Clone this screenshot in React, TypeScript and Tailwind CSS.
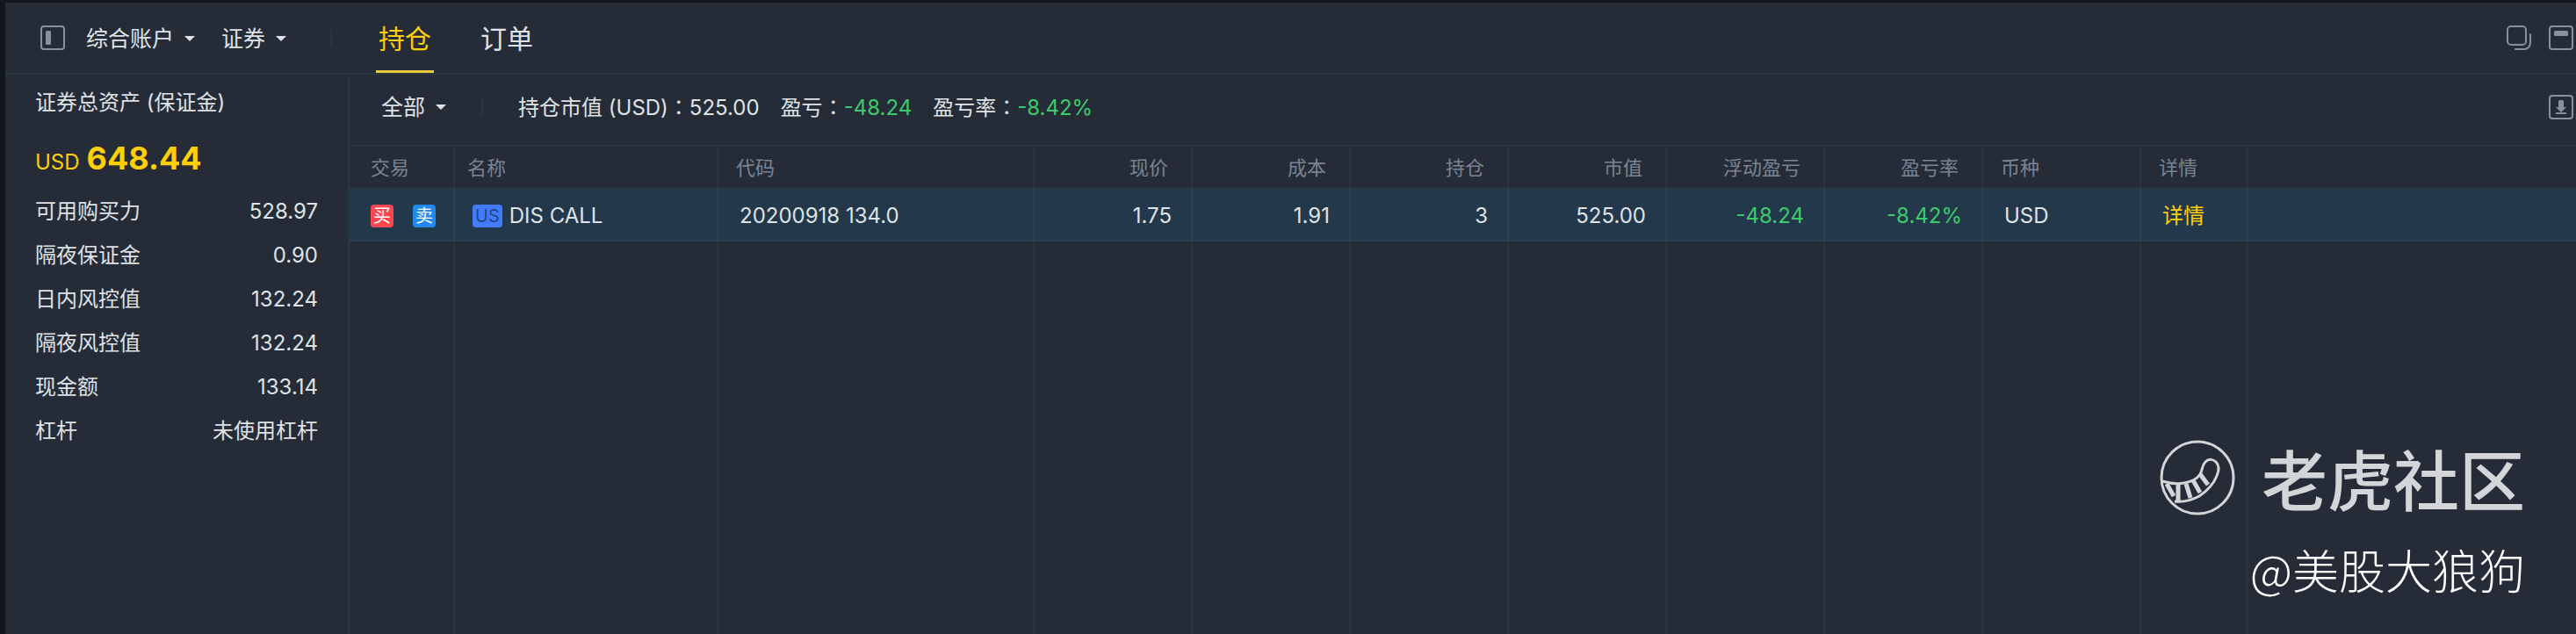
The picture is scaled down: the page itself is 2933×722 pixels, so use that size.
import { useState } from 'react'
import type { ReactNode } from 'react'

const assets = [
  { label: '可用购买力', value: '528.97' },
  { label: '隔夜保证金', value: '0.90' },
  { label: '日内风控值', value: '132.24' },
  { label: '隔夜风控值', value: '132.24' },
  { label: '现金额', value: '133.14' },
  { label: '杠杆', value: '未使用杠杆' },
]

const columns = [
  { title: '交易', width: 'w-[120px]', align: 'text-left' },
  { title: '名称', width: 'w-[300px]', align: 'text-left' },
  { title: '代码', width: 'w-[360px]', align: 'text-left' },
  { title: '现价', width: 'w-[180px]', align: 'text-right' },
  { title: '成本', width: 'w-[180px]', align: 'text-right' },
  { title: '持仓', width: 'w-[180px]', align: 'text-right' },
  { title: '市值', width: 'w-[180px]', align: 'text-right' },
  { title: '浮动盈亏', width: 'w-[180px]', align: 'text-right' },
  { title: '盈亏率', width: 'w-[180px]', align: 'text-right' },
  { title: '币种', width: 'w-[180px]', align: 'text-left' },
  { title: '详情', width: 'w-[122px]', align: 'text-left' },
]

const tabs = ['持仓', '订单']

function Caret() {
  return (
    <svg className="h-[6px] w-[12px]" viewBox="0 0 12 6" fill="currentColor" aria-hidden="true">
      <path d="M0 0h12L6 6z" />
    </svg>
  )
}

function MenuButton({ children }: { children: ReactNode }) {
  return (
    <button type="button" className="flex items-center gap-3 text-[25px]">
      {children}
      <Caret />
    </button>
  )
}

// the TC face centres the full-width colon
function Colon() {
  return <span className="font-['Noto_Sans_CJK_TC',sans-serif]">：</span>
}

function PanelIcon() {
  return (
    <svg className="size-7" viewBox="0 0 28 28" fill="none" aria-hidden="true">
      <rect x="1" y="1" width="26" height="26" rx="3" stroke="currentColor" strokeWidth="2" />
      <rect x="6" y="6" width="6" height="16" rx="1.5" fill="currentColor" />
    </svg>
  )
}

function CopyIcon() {
  return (
    <svg className="size-7" viewBox="0 0 28 28" fill="none" stroke="currentColor" strokeWidth="2" aria-hidden="true">
      <rect x="1" y="1" width="21" height="21" rx="4" />
      <path d="M27 10v10a7 7 0 0 1-7 7H10" strokeLinecap="round" />
    </svg>
  )
}

function WindowIcon() {
  return (
    <svg className="size-7" viewBox="0 0 28 28" fill="none" aria-hidden="true">
      <rect x="1" y="1" width="26" height="26" rx="3" stroke="currentColor" strokeWidth="2" />
      <rect x="6" y="6" width="16" height="6" rx="1.5" fill="currentColor" />
    </svg>
  )
}

function DownloadIcon() {
  return (
    <svg className="size-7" viewBox="0 0 28 28" fill="none" aria-hidden="true">
      <rect x="1" y="1" width="26" height="26" rx="3" stroke="currentColor" strokeWidth="2" />
      <path
        d="M11 7.500a1.500 1.500 0 0 1 1.500-1.500h3a1.500 1.500 0 0 1 1.500 1.500V14h3l-6 6-6-6h3zM8 20h12v2H8z"
        fill="currentColor"
      />
    </svg>
  )
}

function TailLogo() {
  return (
    <svg className="size-[86px]" viewBox="0 0 86 86" fill="none" stroke="currentColor" strokeWidth="3" aria-hidden="true">
      <circle cx="43" cy="43" r="41" />
      <path d="M3 47c7 2 15 4 25 2 9-2 14-4 18-10 3-5 2-10 6-14 4-4 9-3 12 0 4 4 4 9 1 16-4 10-11 17-20 23-9 5-19 7-28 6" />
      <path d="M8 50l8 14M21 50v19M30 50l5 16M38 46l8 14M46 39l9 12" strokeWidth="5" />
    </svg>
  )
}

export default function App() {
  const [tab, setTab] = useState('持仓')

  return (
    <div className="relative flex h-screen flex-col overflow-hidden border-t-[3px] border-l-[6px] border-[#12171d] bg-[#252c37] font-['Inter','Noto_Sans_CJK_SC',sans-serif] text-[24px] leading-9 text-[#dfe2e6]">
      <header className="flex h-[82px] shrink-0 items-center border-b-2 border-[#29353f] pl-10">
        <button type="button" aria-label="侧栏" className="text-[#87909e]">
          <PanelIcon />
        </button>
        <div className="ml-6 flex items-center gap-[30px] pt-0.5">
          <MenuButton>综合账户</MenuButton>
          <MenuButton>证券</MenuButton>
        </div>
        <span className="ml-[50px] h-5 w-0.5 bg-[#29353f]" />
        <nav className="ml-[50px] flex gap-[50px] self-stretch text-[30px]">
          {tabs.map((t) => (
            <button
              key={t}
              type="button"
              onClick={() => setTab(t)}
              className={
                t === tab
                  ? 'border-b-[3px] border-[#e8c93a] px-[3px] pt-1 text-[#fccf0a]'
                  : 'border-b-[3px] border-transparent px-[3px] pt-1'
              }
            >
              {t}
            </button>
          ))}
        </nav>
        <div className="ml-auto flex gap-5 pr-[3px] text-[#87909e]">
          <button type="button" aria-label="复制">
            <CopyIcon />
          </button>
          <button type="button" aria-label="窗口">
            <WindowIcon />
          </button>
        </div>
      </header>

      <div className="flex min-h-0 flex-1">
        <aside className="w-[392px] shrink-0 border-r-2 border-[#29353f] px-[34px] pt-[14px]">
          <h2>证券总资产 (保证金)</h2>
          <p className="mt-5 mb-1.5 flex items-baseline gap-2 leading-[50px] text-[#fccf0a]">
            USD <strong className="text-[36px] font-bold">648.44</strong>
          </p>
          <dl>
            {assets.map((a) => (
              <div key={a.label} className="flex h-[50px] items-center justify-between">
                <dt>{a.label}</dt>
                <dd>{a.value}</dd>
              </div>
            ))}
          </dl>
        </aside>

        <main className="flex min-w-0 flex-1 flex-col">
          <div className="flex h-20 shrink-0 items-center pb-1.5 pl-9">
            <MenuButton>全部</MenuButton>
            <span className="mx-10 h-5 w-0.5 bg-[#29353f]" />
            <div className="flex gap-6">
              <p>
                持仓市值 (USD)
                <Colon />
                525.00
              </p>
              <p>
                盈亏
                <Colon />
                <span className="text-[#3ccb6c]">-48.24</span>
              </p>
              <p>
                盈亏率
                <Colon />
                <span className="text-[#3ccb6c]">-8.42%</span>
              </p>
            </div>
            <button type="button" aria-label="下载" className="ml-auto pr-[3px] text-[#87909e]">
              <DownloadIcon />
            </button>
          </div>

          <div className="min-h-0 flex-1">
            <table className="h-full w-full table-fixed border-separate border-spacing-0">
              <thead>
                <tr className="h-[50px] text-[22px] text-[#7b8492]">
                  {columns.map((c) => (
                    <th
                      key={c.title}
                      className={`border-y-2 border-r-2 border-[#29353f] pt-0.5 pr-[26px] pl-5 font-normal first:pl-6 nth-2:pl-[14px] ${c.width} ${c.align}`}
                    >
                      {c.title}
                    </th>
                  ))}
                  <td className="border-y-2 border-[#29353f]" />
                </tr>
              </thead>
              <tbody>
                <tr className="h-[60px] bg-[#23384b] *:border-b-2 *:border-[#29404f] *:pt-1 *:pr-[22px] *:pl-6 *:not-last:border-r-2 *:nth-2:pl-5">
                  <td>
                    <div className="flex gap-[22px] text-[20px] leading-[26px] text-white">
                      <button type="button" className="size-[26px] shrink-0 rounded-sm bg-[#fc4650]">
                        买
                      </button>
                      <button type="button" className="size-[26px] shrink-0 rounded-sm bg-[#2389ee]">
                        卖
                      </button>
                    </div>
                  </td>
                  <td>
                    <div className="flex items-center gap-2">
                      <span className="rounded-sm bg-[#437bff] px-[3px] text-[20px] leading-[26px] text-[#21467f]">US</span>
                      DIS CALL
                    </div>
                  </td>
                  <td>20200918 134.0</td>
                  <td className="text-right">1.75</td>
                  <td className="text-right">1.91</td>
                  <td className="text-right">3</td>
                  <td className="text-right">525.00</td>
                  <td className="text-right text-[#3ccb6c]">-48.24</td>
                  <td className="text-right text-[#3ccb6c]">-8.42%</td>
                  <td>USD</td>
                  <td>
                    <a href="#detail" className="text-[#fccf0a]">
                      详情
                    </a>
                  </td>
                  <td />
                </tr>
                <tr className="*:border-[#29353f] *:not-last:border-r-2">
                  {columns.map((c) => (
                    <td key={c.title} />
                  ))}
                  <td />
                </tr>
              </tbody>
            </table>
          </div>
        </main>
      </div>

      <div className="pointer-events-none absolute right-[58px] bottom-9 flex flex-col items-end gap-3 font-['Noto_Sans_CJK_SC',sans-serif]">
        <div className="flex items-center gap-[30px] text-[75px] leading-[108px] font-medium text-[#d3d5d8]">
          <TailLogo />
          老虎社区
        </div>
        <p className="text-[53px] leading-[76px] font-light text-white">@美股大狼狗</p>
      </div>
    </div>
  )
}
